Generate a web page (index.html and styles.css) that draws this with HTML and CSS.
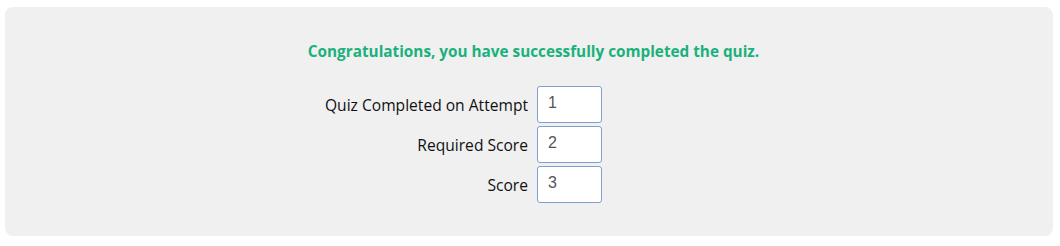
FILE: index.html
```html
<!DOCTYPE html>
<html>
<head>
    <meta charset="utf-8">
    <title>Quiz Result</title>
    <link rel="stylesheet" href="styles.css">
</head>
<body>
<div class="result-panel">
    <div class="result-message">Congratulations, you have successfully completed the quiz.</div>

    <div class="result-grid">
        <label class="result-label" for="attempt">Quiz Completed on Attempt</label>
        <div><input id="attempt" class="result-input" type="text" value="1" readonly></div>

        <label class="result-label" for="requiredScore">Required Score</label>
        <div><input id="requiredScore" class="result-input" type="text" value="2" readonly></div>

        <label class="result-label" for="score">Score</label>
        <div><input id="score" class="result-input" type="text" value="3" readonly></div>
    </div>
</div>
</body>
</html>
```

FILE: styles.css
```css
body {
    font-family: "Open Sans", "Noto Sans", sans-serif;
    background-color: white;
    margin: 0;
    padding: 7px 7px 10px 5px;
    font-size: 15.6px;
}

.result-panel {
    background-color: #f0f0f0;
    border-radius: 8px;
    padding: 34px 0 30px;
    height: 229px;
    box-sizing: border-box;
}

.result-message {
    text-align: center;
    color: #1ab17c;
    font-weight: 700;
    font-size: 15.3px;
    padding-left: 9px;
    margin-bottom: 25px;
}

.result-grid {
    display: grid;
    grid-template-columns: 1fr 1fr;
    row-gap: 3px;
    align-items: center;
}

.result-label {
    text-align: right;
    color: #111;
    padding-right: 1px;
}

.result-input {
    margin-left: 8px;
    width: 65px;
    height: 37px;
    box-sizing: border-box;
    border: 1px solid #7f9fcd;
    border-radius: 3px;
    padding: 0 10px 4px;
    font-family: "Liberation Sans", Arial, sans-serif;
    font-size: 16px;
    color: #555;
    background-color: white;
    display: block;
}
```
